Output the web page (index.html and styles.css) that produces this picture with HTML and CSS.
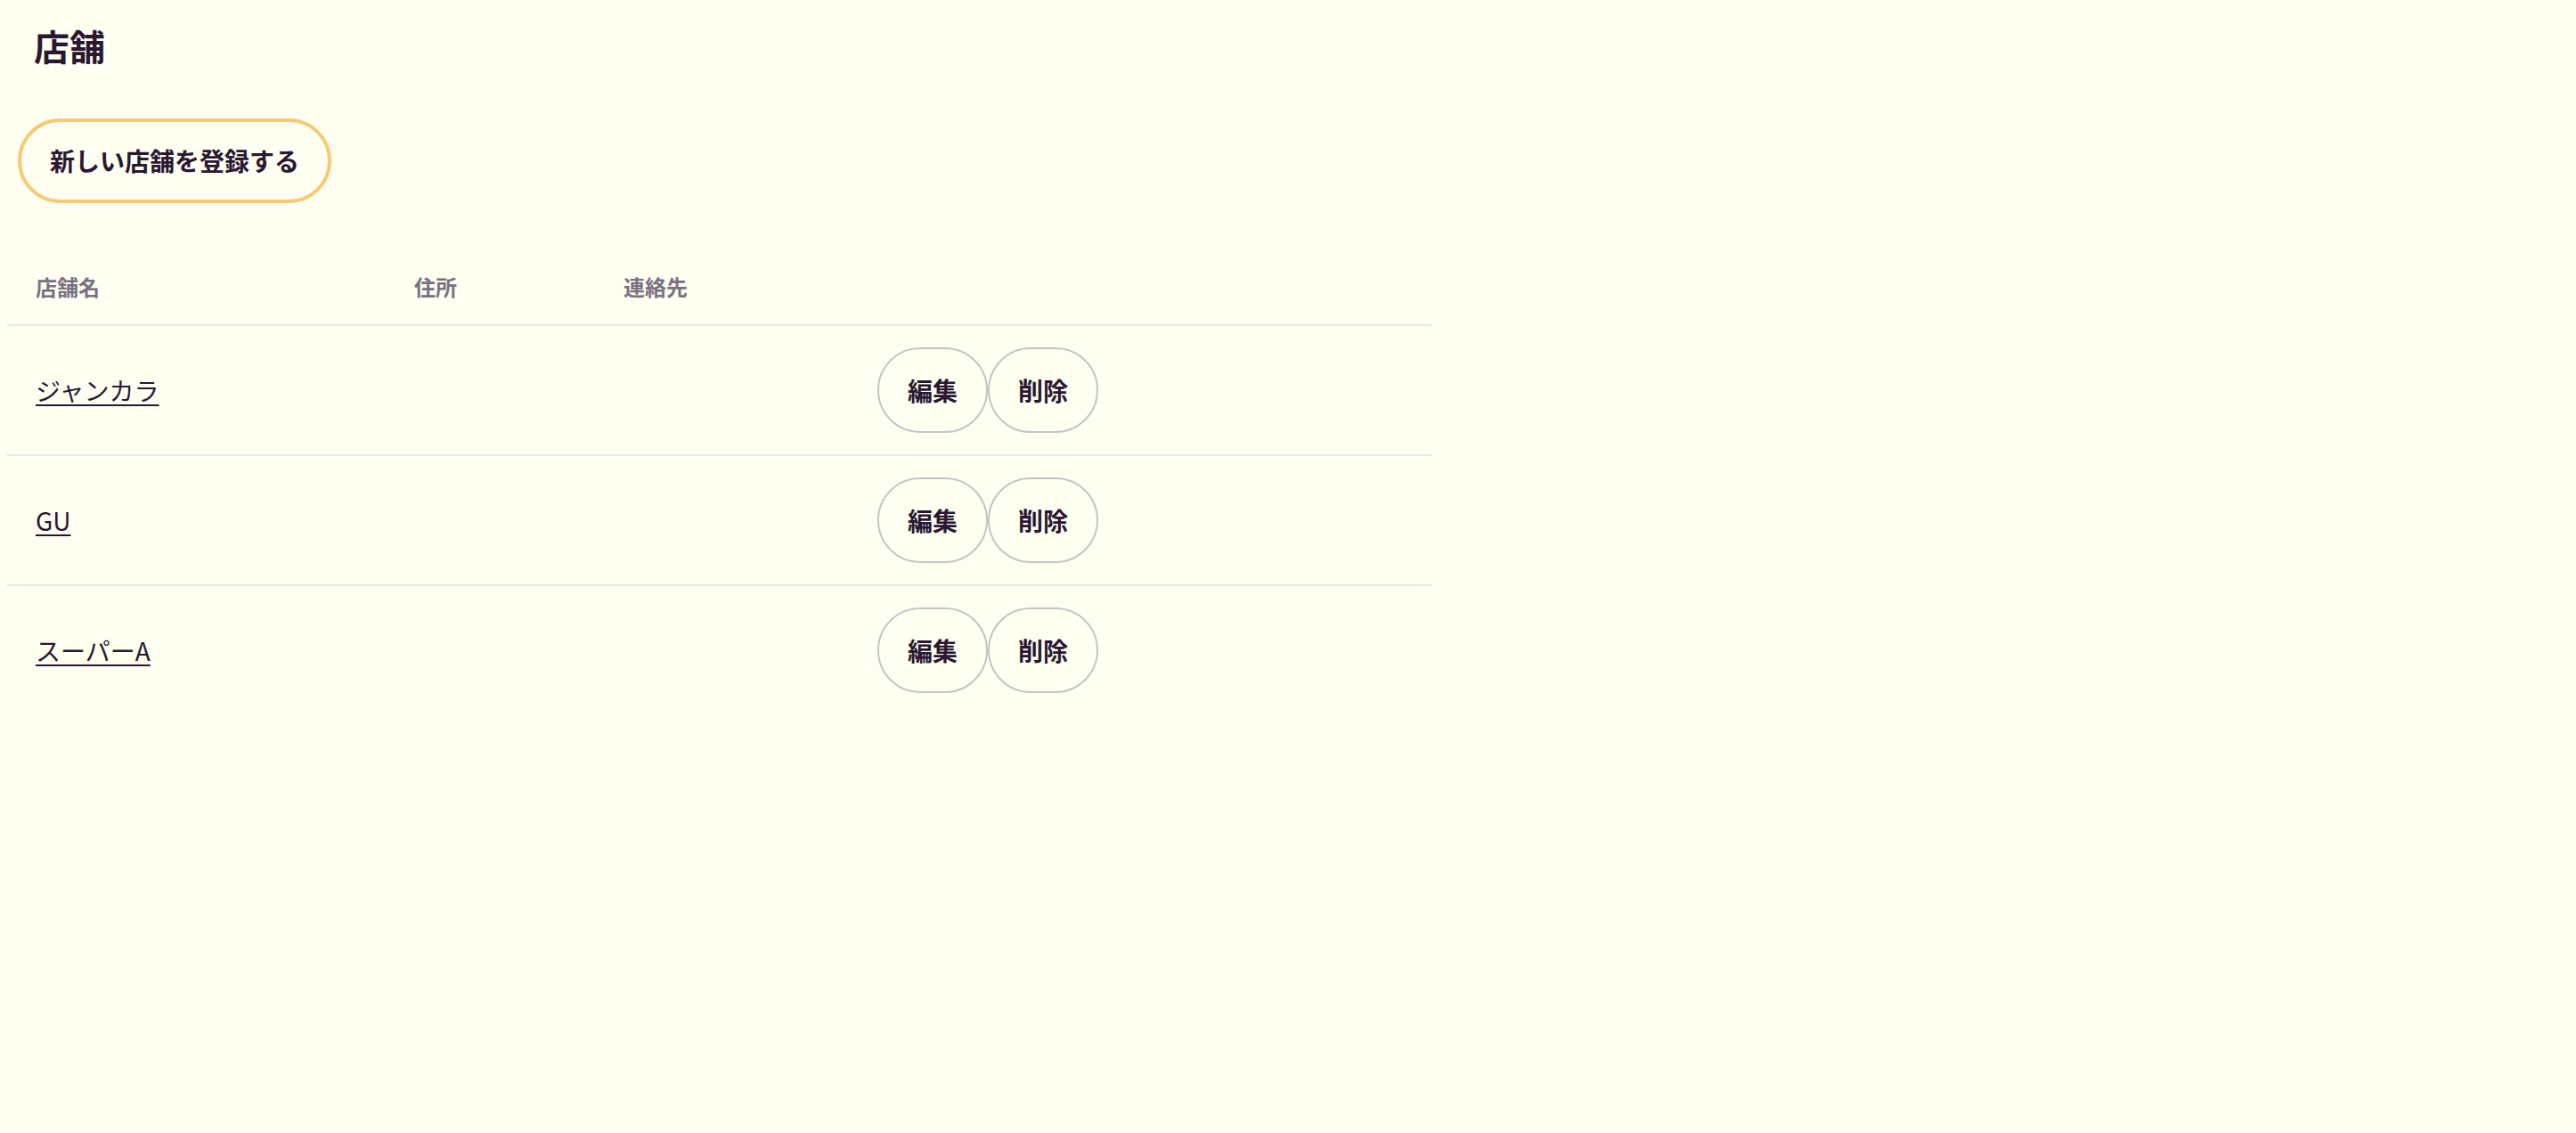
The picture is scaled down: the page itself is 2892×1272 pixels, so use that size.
FILE: index.html
```html
<!DOCTYPE html>
<html lang="ja">
<head>
<meta charset="utf-8">
<title>店舗</title>
<link rel="stylesheet" href="styles.css">
</head>
<body>
<main class="page">
  <h1 class="title">店舗</h1>
  <a class="btn-primary" href="#">新しい店舗を登録する</a>
  <table class="shops">
    <colgroup>
      <col class="col-name">
      <col class="col-addr">
      <col class="col-contact">
      <col class="col-actions">
    </colgroup>
    <thead>
      <tr>
        <th>店舗名</th>
        <th>住所</th>
        <th>連絡先</th>
        <th></th>
      </tr>
    </thead>
    <tbody>
      <tr>
        <td><a class="shop-link" href="#">ジャンカラ</a></td>
        <td></td>
        <td></td>
        <td><div class="actions"><a class="btn" href="#">編集</a><a class="btn" href="#">削除</a></div></td>
      </tr>
      <tr>
        <td><a class="shop-link" href="#">GU</a></td>
        <td></td>
        <td></td>
        <td><div class="actions"><a class="btn" href="#">編集</a><a class="btn" href="#">削除</a></div></td>
      </tr>
      <tr>
        <td><a class="shop-link" href="#">スーパーA</a></td>
        <td></td>
        <td></td>
        <td><div class="actions"><a class="btn" href="#">編集</a><a class="btn" href="#">削除</a></div></td>
      </tr>
    </tbody>
  </table>
</main>
</body>
</html>
```

FILE: styles.css
```css
html, body {
  background: #fefff0;
}
body {
  margin: 8px;
  color: #2a1833;
  font-family: "Noto Sans CJK JP", "Noto Sans", sans-serif;
}
.page {
  display: flex;
  flex-direction: column;
  align-items: flex-start;
}
.title {
  margin: 13px 0 0 0;
  padding-left: 30px;
  font-size: 40px;
  line-height: 60px;
  font-weight: 700;
}
.btn-primary {
  display: inline-block;
  margin: 52px 0 0 12px;
  padding: 24px 32px;
  border: 4px solid #f6cb76;
  border-radius: 9999px;
  font-size: 28px;
  line-height: 39px;
  font-weight: 700;
  color: #2a1833;
  text-decoration: none;
}
.shops {
  margin-top: 52px;
  width: 1600px;
  border-collapse: collapse;
}
.col-name { width: 425px; }
.col-addr { width: 235px; }
.col-contact { width: 285px; }
.shops th {
  text-align: left;
  padding: 24px 32px;
  font-size: 24px;
  line-height: 36px;
  font-weight: 700;
  color: #7b7081;
}
.shops thead tr {
  border-bottom: 2px solid #e9e9e4;
}
.shops tbody tr + tr {
  border-top: 2px solid #e9e9e4;
}
.shops td {
  padding: 24px 32px;
  font-size: 28px;
  line-height: 42px;
  vertical-align: middle;
}
.shop-link {
  color: #2a1833;
  text-decoration: underline;
  text-decoration-thickness: 2px;
  text-underline-offset: 4px;
}
.actions {
  display: flex;
}
.btn {
  display: inline-block;
  padding: 25px 32px;
  border: 2px solid #c4c4c4;
  border-radius: 9999px;
  font-size: 28px;
  line-height: 42px;
  font-weight: 700;
  color: #2a1833;
  text-decoration: none;
}
```
